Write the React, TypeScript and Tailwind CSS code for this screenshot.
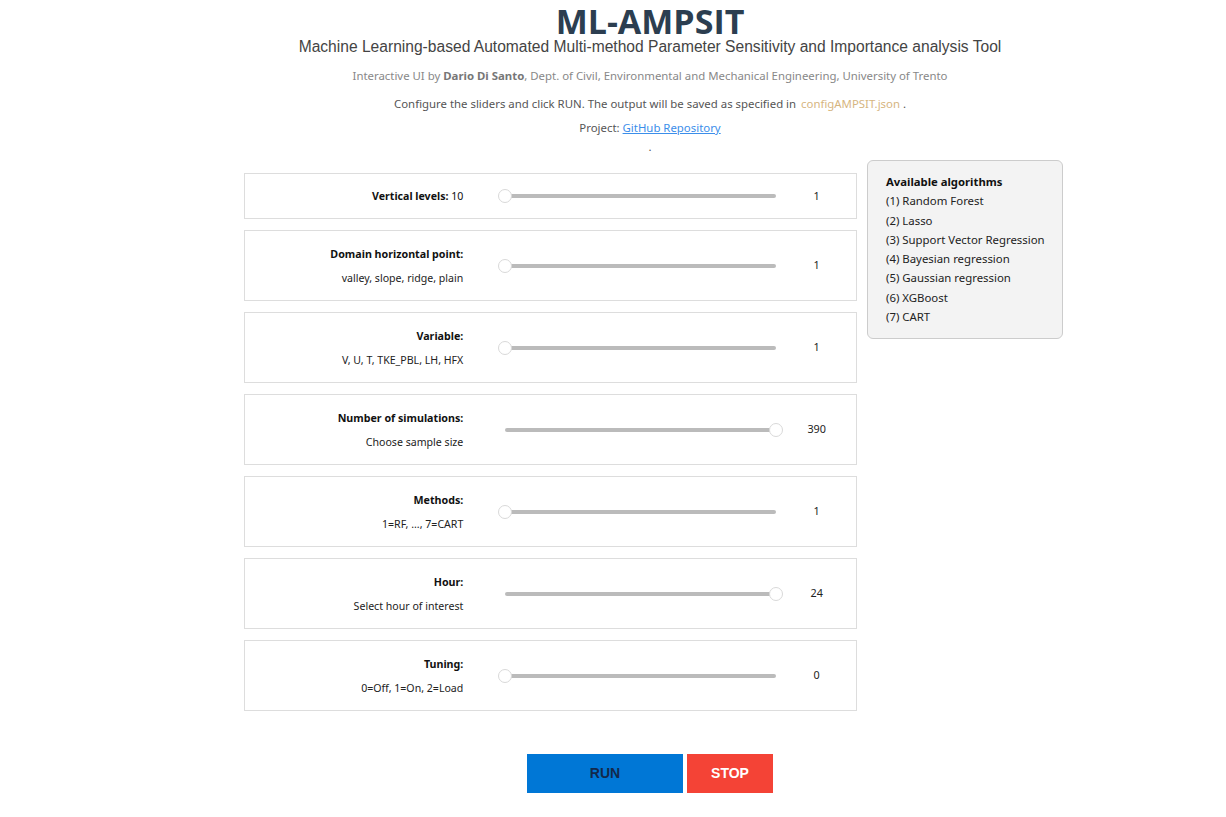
import React from "react";

const rows = [
  { label: "Vertical levels:", extra: "10", sub: "", value: "1", pos: 0 },
  { label: "Domain horizontal point:", extra: "", sub: "valley, slope, ridge, plain", value: "1", pos: 0 },
  { label: "Variable:", extra: "", sub: "V, U, T, TKE_PBL, LH, HFX", value: "1", pos: 0 },
  { label: "Number of simulations:", extra: "", sub: "Choose sample size", value: "390", pos: 1 },
  { label: "Methods:", extra: "", sub: "1=RF, ..., 7=CART", value: "1", pos: 0 },
  { label: "Hour:", extra: "", sub: "Select hour of interest", value: "24", pos: 1 },
  { label: "Tuning:", extra: "", sub: "0=Off, 1=On, 2=Load", value: "0", pos: 0 },
];

const algos = [
  "(1) Random Forest",
  "(2) Lasso",
  "(3) Support Vector Regression",
  "(4) Bayesian regression",
  "(5) Gaussian regression",
  "(6) XGBoost",
  "(7) CART",
];

function Slider({ pos }: { pos: number }) {
  return (
    <div className="relative w-[285px] h-[16px] flex items-center">
      <div className="mx-[7px] h-[4px] w-full rounded-full bg-[#bbbbbb]" />
      <div
        className={
          "absolute top-[1px] w-[14px] h-[14px] rounded-full bg-white border border-[#d9d9d9] " +
          (pos === 0 ? "left-0" : "right-0")
        }
      />
    </div>
  );
}

export default function App() {
  return (
    <div
      className="min-h-[817px] bg-white pl-[74px] text-[11.4px] text-[#222]"
      style={{ fontFamily: '"Noto Sans", "Open Sans", sans-serif' }}
    >
      <div className="flex flex-col items-center">
        <h1
          className="mt-[4px] text-[34px] leading-[34px] font-bold text-[#2c3e50]"
          style={{ fontFamily: '"Open Sans", "Noto Sans", sans-serif' }}
        >
          ML-AMPSIT
        </h1>
        <div
          className="text-[15.6px] leading-[18px] text-[#444]"
          style={{ fontFamily: '"Liberation Sans", Arial, sans-serif' }}
        >
          Machine Learning-based Automated Multi-method Parameter Sensitivity and Importance analysis Tool
        </div>
        <div className="mt-[11px] text-[11.4px] leading-[17px] text-[#888]">
          Interactive UI by <b className="text-[#777]">Dario Di Santo</b>, Dept. of Civil, Environmental and Mechanical
          Engineering, University of Trento
        </div>
        <div className="mt-[11px] text-[11.4px] leading-[17px] text-[#555]">
          Configure the sliders and click RUN. The output will be saved as specified in{" "}
          <span className="ml-[2px] text-[#d6b57f]">configAMPSIT.json</span> .
        </div>
        <div className="mt-[7px] text-[11.4px] leading-[17px] text-[#555]">
          Project:{" "}
          <a href="#" className="text-[#3b8eea] underline">
            GitHub Repository
          </a>
        </div>
        <div className="mt-[2px] text-[11.4px] leading-[17px] text-[#555]">.</div>
      </div>

      <div className="ml-[170px] mt-[5px] flex items-start gap-[10px]">
        <div className="flex flex-col gap-[11px] pt-[13px]">
          {rows.map((r, i) => (
            <div
              key={i}
              className={
                "w-[613px] border border-[#dddddd] flex items-center " + (r.sub ? "h-[71px]" : "h-[46px]")
              }
            >
              <div className="w-[222px] flex flex-col items-end">
                {r.sub ? (
                  <>
                    <div className="font-bold text-[10.7px] leading-[14px] text-[#111]">{r.label}</div>
                    <div className="mt-[10px] text-[10.6px] leading-[14px] text-[#222]">{r.sub}</div>
                  </>
                ) : (
                  <div className="text-[10.6px] leading-[14px] text-[#111]">
                    <b>{r.label}</b> {r.extra}
                  </div>
                )}
              </div>
              <div className="ml-[35px]">
                <Slider pos={r.pos} />
              </div>
              <div className="w-[80px] text-center text-[10.8px] text-[#222] ml-[-6px]">{r.value}</div>
            </div>
          ))}
        </div>

        <div className="w-[196px] h-[179px] rounded-[6px] border border-[#cccccc] bg-[#f3f3f3] pl-[18px] pt-[12px]">
          <div className="font-bold text-[11.3px] leading-[17px] text-[#111]">Available algorithms</div>
          {algos.map((a) => (
            <div key={a} className="mt-[2.3px] text-[11.4px] leading-[17px] text-[#222]">
              {a}
            </div>
          ))}
        </div>
      </div>

      <div
        className="mt-[43px] flex justify-center gap-[4px]"
        style={{ fontFamily: '"Liberation Sans", Arial, sans-serif' }}
      >
        <button className="w-[156px] h-[39px] bg-[#0077d6] text-[#13294b] font-bold text-[14px]">RUN</button>
        <button className="w-[86px] h-[39px] bg-[#f44336] text-white font-bold text-[14px]">STOP</button>
      </div>
    </div>
  );
}
